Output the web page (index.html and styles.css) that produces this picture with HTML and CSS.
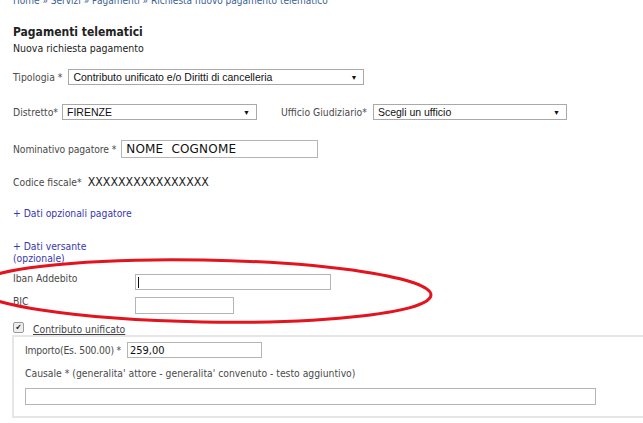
FILE: index.html
```html
<!DOCTYPE html>
<html lang="it">
<head>
<meta charset="utf-8">
<title>Pagamenti telematici</title>
<link rel="stylesheet" href="styles.css">
</head>
<body>
<div class="page">
  <div class="crumb">Home » Servizi » Pagamenti » Richiesta nuovo pagamento telematico</div>
  <h1 class="title">Pagamenti telematici</h1>
  <h2 class="subtitle">Nuova richiesta pagamento</h2>

  <div class="row row-tipologia">
    <span class="label">Tipologia *</span>
    <div class="select sel-tipologia"><span>Contributo unificato e/o Diritti di cancelleria</span><i>▼</i></div>
  </div>

  <div class="row row-distretto">
    <span class="label">Distretto*</span>
    <div class="select sel-distretto"><span>FIRENZE</span><i>▼</i></div>
    <span class="label label-ufficio">Ufficio Giudiziario*</span>
    <div class="select sel-ufficio"><span>Scegli un ufficio</span><i>▼</i></div>
  </div>

  <div class="row row-nome">
    <span class="label lab-nome">Nominativo pagatore *</span>
    <div class="input in-nome">NOME&nbsp; COGNOME</div>
  </div>

  <div class="row row-cf">
    <span class="label">Codice fiscale*</span>
    <span class="cf">XXXXXXXXXXXXXXXX</span>
  </div>

  <div class="link link-opz">+ Dati opzionali pagatore</div>
  <div class="link link-vers">+ Dati versante<br>(opzionale)</div>

  <div class="row row-iban">
    <span class="label lab-wide">Iban Addebito</span>
    <div class="input in-iban"><span class="caret"></span></div>
  </div>
  <div class="row row-bic">
    <span class="label lab-wide">BIC</span>
    <div class="input in-bic"></div>
  </div>

  <div class="row row-check">
    <span class="check">✔</span>
    <span class="check-label">Contributo unificato</span>
  </div>

  <div class="fieldset">
    <div class="row row-importo">
      <span class="label lab-importo">Importo(Es. 500.00) *</span>
      <div class="input in-importo">259,00</div>
    </div>
    <div class="causale">Causale * (generalita' attore - generalita' convenuto - testo aggiuntivo)</div>
    <div class="input in-causale"></div>
  </div>

  <svg class="ellipse" width="643" height="423" viewBox="0 0 643 423">
    <ellipse cx="203" cy="291" rx="228" ry="31" transform="rotate(1 203 291)" fill="none" stroke="#e3141d" stroke-width="3"/>
  </svg>
</div>
</body>
</html>
```
FILE: styles.css
```css
html, body {
  margin: 0;
  padding: 0;
  background: #fff;
}
.page {
  position: relative;
  width: 643px;
  height: 423px;
  overflow: hidden;
  padding-left: 13px;
  box-sizing: border-box;
  font-family: "DejaVu Sans Condensed", "DejaVu Sans", sans-serif;
  font-size: 10.3px;
  color: #4a4a4a;
}
.crumb {
  height: 8px;
  line-height: 10px;
  margin-top: -4px;
  color: #3a5f8f;
  font-size: 10px;
}
.title {
  margin: 21px 0 0 0;
  font-size: 12px;
  font-weight: bold;
  line-height: 14px;
  color: #222;
}
.subtitle {
  margin: 2px 0 0 0;
  font-size: 10.5px;
  font-weight: normal;
  line-height: 14px;
  color: #222;
}
.row {
  display: flex;
  align-items: center;
}
.label {
  white-space: nowrap;
}
.select {
  display: flex;
  align-items: center;
  justify-content: space-between;
  box-sizing: border-box;
  height: 16px;
  border: 1px solid #a9a9a9;
  background: #fff;
  padding: 0 6px 0 4px;
  font-family: "Liberation Sans", Arial, sans-serif;
  font-size: 10.5px;
  color: #111;
}
.select i {
  font-style: normal;
  font-size: 7px;
  color: #111;
}
.input {
  box-sizing: border-box;
  border: 1px solid #b5b5b5;
  background: #fff;
  color: #111;
  display: flex;
  align-items: center;
}
.row-tipologia {
  margin-top: 14px;
  height: 16px;
}
.sel-tipologia {
  margin-left: 6px;
  width: 296px;
}
.row-distretto {
  margin-top: 19px;
  height: 16px;
}
.sel-distretto {
  margin-left: 4px;
  width: 195px;
}
.label-ufficio {
  margin-left: 24px;
}
.sel-ufficio {
  margin-left: 6px;
  width: 194px;
}
.row-nome {
  margin-top: 20px;
  height: 18px;
}
.lab-nome {
  letter-spacing: -0.1px;
}
.in-nome {
  margin-left: 5px;
  width: 197px;
  height: 18px;
  padding-left: 4px;
  font-family: "DejaVu Sans", sans-serif;
  font-size: 12px;
  letter-spacing: 0.2px;
}
.row-cf {
  margin-top: 15px;
  height: 18px;
}
.cf {
  margin-left: 6px;
  font-family: "DejaVu Sans Condensed", "DejaVu Sans", sans-serif;
  font-size: 12.3px;
  color: #222;
}
.link {
  color: #3838b0;
  line-height: 12px;
}
.link-opz {
  margin-top: 16px;
}
.link-vers {
  margin-top: 21px;
}
.row-iban {
  margin-top: 10px;
  height: 16px;
}
.lab-wide {
  width: 122px;
  align-self: flex-start;
  line-height: 12px;
  margin-top: -2px;
}
.in-iban {
  width: 196px;
  height: 16px;
  padding-left: 2px;
}
.caret {
  display: block;
  width: 1px;
  height: 11px;
  background: #111;
}
.row-bic {
  margin-top: 7px;
  height: 17px;
}
.in-bic {
  width: 99px;
  height: 17px;
}
.row-check {
  margin-top: 8px;
  height: 14px;
}
.check {
  display: inline-flex;
  align-items: center;
  justify-content: center;
  width: 9px;
  height: 9px;
  border: 1px solid #999;
  border-radius: 2px;
  background: #eee;
  font-size: 8px;
  line-height: 9px;
  color: #222;
  margin-top: -3px;
}
.check-label {
  margin-left: 9px;
  text-decoration: underline;
  color: #444;
}
.fieldset {
  margin-top: -1px;
  margin-left: -1px;
  width: 660px;
  height: 83px;
  box-sizing: border-box;
  border: 2px solid #e6e6e6;
  border-right: none;
  padding: 5px 0 0 11px;
}
.row-importo {
  height: 16px;
}
.lab-importo {
  letter-spacing: -0.2px;
}
.in-importo {
  margin-left: 6px;
  width: 135px;
  height: 16px;
  padding-left: 2px;
  font-size: 11px;
}
.causale {
  margin-top: 9px;
  line-height: 12px;
}
.in-causale {
  margin-top: 9px;
  width: 571px;
  height: 17px;
}
.ellipse {
  position: absolute;
  left: 0;
  top: 0;
  pointer-events: none;
}
```
